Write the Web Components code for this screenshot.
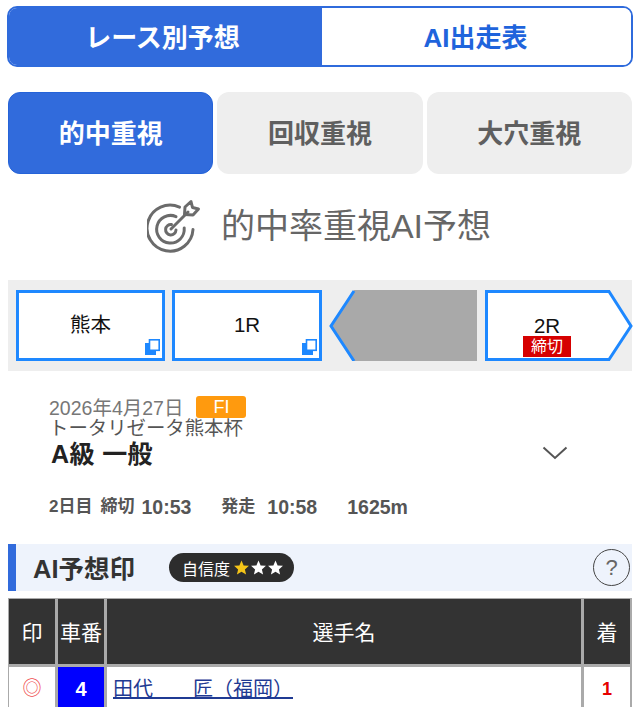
<!DOCTYPE html>
<html lang="ja">
<head>
<meta charset="utf-8">
<title>AI予想</title>
<style>
  html, body { margin: 0; padding: 0; background: #fff; }
  body {
    height: 707px;
    overflow: hidden;
    font-family: "Liberation Sans", "Noto Sans CJK JP", sans-serif;
    padding: 6px 8px 0;
    box-sizing: border-box;
  }
</style>
</head>
<body>
  <seg-tabs>
    <span slot="left">レース別予想</span>
    <span slot="right">AI出走表</span>
  </seg-tabs>
  <mode-tabs>
    <mode-tab active>的中重視</mode-tab>
    <mode-tab>回収重視</mode-tab>
    <mode-tab>大穴重視</mode-tab>
  </mode-tabs>
  <predict-heading>的中率重視AI予想</predict-heading>
  <race-nav>
    <nav-box copy>熊本</nav-box>
    <nav-box copy>1R</nav-box>
    <nav-box shape="prev"></nav-box>
    <nav-box shape="next" closed>2R</nav-box>
  </race-nav>
  <race-info></race-info>
  <section-title></section-title>
  <mark-table></mark-table>

<script>
(function() {
  // top segment: two halves inside one blue outline
  class SegTabs extends HTMLElement {
    constructor() {
      super();
      this.attachShadow({ mode: "open" });
      this.shadowRoot.innerHTML = `
        <style>
          :host {
            display: grid;
            grid-template-columns: 313px 1fr;
            height: 61px;
            margin: 0 -1px 0 -1px;
            border: 2.5px solid #2f6bdc;
            border-radius: 10px;
            box-sizing: border-box;
            overflow: hidden;
            font-weight: bold;
            font-size: 26px;
          }
          div { display: flex; align-items: center; justify-content: center; padding-bottom: 2px; }
          .on { background: #316bdc; color: #fff; padding-right: 6px; }
          .off { background: #fff; color: #1f64dc; padding-right: 2px; }
        </style>
        <div class="on"><slot name="left"></slot></div>
        <div class="off"><slot name="right"></slot></div>
      `;
    }
  }
  customElements.define("seg-tabs", SegTabs);

  class ModeTabs extends HTMLElement {
    constructor() {
      super();
      this.attachShadow({ mode: "open" });
      this.shadowRoot.innerHTML = `
        <style>
          :host {
            display: grid;
            grid-template-columns: repeat(3, 1fr);
            gap: 4px;
            margin-top: 25px;
          }
        </style>
        <slot></slot>
      `;
    }
  }
  customElements.define("mode-tabs", ModeTabs);

  class ModeTab extends HTMLElement {
    constructor() {
      super();
      this.attachShadow({ mode: "open" });
      this.shadowRoot.innerHTML = `
        <style>
          :host {
            display: flex;
            align-items: center;
            justify-content: center;
            height: 82px;
            box-sizing: border-box;
            padding-bottom: 4px;
            border-radius: 12px;
            background: #eeeeee;
            color: #5f5f5f;
            font-size: 26px;
            font-weight: bold;
          }
          :host([active]) {
            background: #316bdc;
            border: 1px solid #2563d8;
            color: #fff;
          }
        </style>
        <slot></slot>
      `;
    }
  }
  customElements.define("mode-tab", ModeTab);

  class PredictHeading extends HTMLElement {
    constructor() {
      super();
      this.attachShadow({ mode: "open" });
      this.shadowRoot.innerHTML = `
        <style>
          :host {
            display: flex;
            align-items: center;
            justify-content: center;
            gap: 19px;
            height: 54px;
            margin-top: 26px;
            padding-right: 2px;
            color: #666;
            font-size: 34px;
          }
          span { margin-top: -7px; }
          svg { width: 55px; height: 54px; flex: none; margin-top: -2px; }
        </style>
        <svg viewBox="0 0 55 54" fill="none" stroke="#6b6b6b" stroke-width="3" stroke-linecap="round" stroke-linejoin="round">
          <path d="M32.5 8.200A23 23 0 1 0 46 30.500"/>
          <path d="M29 17.600A13.800 13.800 0 1 0 37.200 29"/>
          <path d="M24.500 25.600A5.200 5.200 0 1 0 29 31"/>
          <path d="M24 30 L41 13"/>
          <path d="M37.500 15.500 L38 8 L44 2.500 L45.500 8.500 L51.500 10 L46 16 Z"/>
        </svg>
        <span><slot></slot></span>
      `;
    }
  }
  customElements.define("predict-heading", PredictHeading);

  class RaceNav extends HTMLElement {
    constructor() {
      super();
      this.attachShadow({ mode: "open" });
      this.shadowRoot.innerHTML = `
        <style>
          :host {
            display: grid;
            grid-template-columns: 149px 150px 149px 148px;
            gap: 7px;
            height: 91px;
            margin-top: 26px;
            padding: 10px 0 0 8px;
            box-sizing: border-box;
            background: #eeeeee;
          }
        </style>
        <slot></slot>
      `;
    }
  }
  customElements.define("race-nav", RaceNav);

  class NavBox extends HTMLElement {
    constructor() {
      super();
      this.attachShadow({ mode: "open" });
      const shape = this.getAttribute("shape");
      let bg = "";
      if (shape === "prev") {
        bg = `<svg viewBox="0 0 149 71" preserveAspectRatio="none">
          <path d="M25 0H148V71H25L1 36Z" fill="#a9a9a9"/>
          <path d="M25 1L2 36L25 71" fill="none" stroke="#1e88ff" stroke-width="3"/>
        </svg>`;
      } else if (shape === "next") {
        bg = `<svg viewBox="0 0 148 71" preserveAspectRatio="none">
          <path d="M1.500 1.500H124L146 36L124 69.500H1.500Z" fill="#fff" stroke="#1e88ff" stroke-width="3"/>
        </svg>`;
      } else {
        bg = `<svg viewBox="0 0 150 71" preserveAspectRatio="none">
          <rect x="1.500" y="1.500" width="147" height="68" fill="#fff" stroke="#1e88ff" stroke-width="3"/>
        </svg>`;
      }
      const copy = this.hasAttribute("copy") ? `
        <svg class="copy" viewBox="0 0 15 16">
          <rect x="0" y="4" width="11" height="12" fill="#1e88ff"/>
          <rect x="4.500" y="0.800" width="9.700" height="10.500" fill="#fff" stroke="#1e88ff" stroke-width="1.600"/>
        </svg>` : "";
      const closed = this.hasAttribute("closed") ? `<span class="closed">締切</span>` : "";
      this.shadowRoot.innerHTML = `
        <style>
          :host {
            display: flex;
            flex-direction: column;
            align-items: center;
            justify-content: center;
            position: relative;
            height: 71px;
            box-sizing: border-box;
            padding-bottom: 1px;
            color: #111;
            font-size: 20.500px;
            line-height: 22px;
          }
          :host([shape="next"]) { padding: 21px 24px 0 0; }
          svg { position: absolute; left: 0; top: 0; width: 100%; height: 100%; }
          svg.copy { left: auto; top: auto; right: 5px; bottom: 6px; width: 15px; height: 16px; }
          .label { position: relative; }
          .closed {
            position: relative;
            background: #d60000;
            color: #fff;
            font-size: 16px;
            line-height: 21px;
            width: 48px;
            margin-top: -1px;
            text-align: center;
          }
        </style>
        ${bg}${copy}
        <span class="label"><slot></slot></span>
        ${closed}
      `;
    }
  }
  customElements.define("nav-box", NavBox);

  class RaceInfo extends HTMLElement {
    constructor() {
      super();
      this.attachShadow({ mode: "open" });
      this.shadowRoot.innerHTML = `
        <style>
          :host {
            display: block;
            position: relative;
            padding: 25px 0 0 41px;
            height: 173px;
            box-sizing: border-box;
          }
          .top { display: flex; align-items: center; height: 22px; gap: 13px; }
          .date { color: #777; font-size: 19.500px; margin-top: -2px; }
          .grade {
            width: 50px;
            height: 22px;
            line-height: 22px;
            border-radius: 3px;
            background: #ff9a0e;
            color: #fff;
            text-align: center;
            font-size: 18px;
          }
          .title { color: #555; font-size: 19.400px; line-height: 20px; }
          .cls { color: #222; font-size: 25px; font-weight: bold; line-height: 28px; margin: 2px 0 0 2px; letter-spacing: .4px; }
          .meta {
            display: flex;
            color: #555;
            font-size: 19.500px;
            font-weight: bold;
            margin-top: 27px;
            line-height: 24px;
          }
          .meta small { font-size: 17px; font-weight: bold; }
          .m1 { margin-left: 8px; }
          .n1 { margin-left: 7px; }
          .m2 { margin-left: 30px; }
          .n2 { margin-left: 12px; }
          .m3 { margin-left: 30px; }
          .chev { position: absolute; right: 64px; top: 75px; width: 26px; height: 14px; }
        </style>
        <div class="top"><span class="date">2026年4月27日</span><span class="grade">FI</span></div>
        <div class="title">トータリゼータ熊本杯</div>
        <div class="cls">A級 一般</div>
        <div class="meta">
          <small>2日目</small><small class="m1">締切</small><span class="n1">10:53</span>
          <small class="m2">発走</small><span class="n2">10:58</span>
          <span class="m3">1625m</span>
        </div>
        <svg class="chev" viewBox="0 0 26 14" fill="none" stroke="#555" stroke-width="2">
          <path d="M1.500 1.500L13 12L24.500 1.500"/>
        </svg>
      `;
    }
  }
  customElements.define("race-info", RaceInfo);

  class SectionTitle extends HTMLElement {
    constructor() {
      super();
      this.attachShadow({ mode: "open" });
      const star = c => `<svg viewBox="0 0 24 24"><path fill="${c}" d="M12 2l3 7 7.500 .7-5.700 5 1.700 7.300-6.500-3.900-6.500 3.900 1.700-7.300-5.700-5 7.500-.7z"/></svg>`;
      this.shadowRoot.innerHTML = `
        <style>
          :host {
            display: flex;
            align-items: center;
            height: 47px;
            box-sizing: border-box;
            background: #eef3fc;
            border-left: 8px solid #316bdc;
            padding: 0 2px 0 17px;
          }
          h2 { margin: -2px 0 0; color: #333; font-size: 25.500px; font-weight: bold; }
          .pill {
            display: flex;
            align-items: center;
            gap: 3px;
            height: 29px;
            width: 125px;
            box-sizing: border-box;
            margin: 0 0 0 34px;
            padding-left: 13px;
            border-radius: 15px;
            background: #2d2d2d;
            color: #fff;
            font-size: 16px;
          }
          .stars { display: flex; }
          .stars svg { width: 17px; height: 17px; }
          .help {
            display: flex;
            align-items: center;
            justify-content: center;
            margin-left: auto;
            width: 37px;
            height: 37px;
            box-sizing: border-box;
            border: 1px solid #444;
            border-radius: 50%;
            color: #666;
            font-size: 22px;
          }
        </style>
        <h2>AI予想印</h2>
        <div class="pill">自信度
          <span class="stars">${star("#f5c518")}${star("#fff")}${star("#fff")}</span>
        </div>
        <div class="help">?</div>
      `;
    }
  }
  customElements.define("section-title", SectionTitle);

  class MarkTable extends HTMLElement {
    constructor() {
      super();
      this.attachShadow({ mode: "open" });
      this.shadowRoot.innerHTML = `
        <style>
          :host {
            display: grid;
            grid-template-columns: 46px 46px 474px 46px;
            grid-template-rows: 65px 56px;
            gap: 3px;
            margin-top: 7px;
            padding: 1px 2px 0 1px;
            background: #aaaaaa;
          }
          div { display: flex; align-items: center; justify-content: center; }
          .th { background: #333; color: #fff; font-size: 21px; padding-bottom: 2px; box-sizing: border-box; }
          .td { background: #fff; align-items: flex-start; padding-top: 7px; line-height: 30px; font-size: 20px; }
          .mark { color: #f05050; font-size: 19px; }
          .car { background: #0000ff; color: #fff; font-weight: bold; }
          .name { justify-content: flex-start; padding-left: 6px; }
          .name a { color: #1f3a93; text-decoration: underline; font-size: 20px; }
          .rank { color: #e60000; font-weight: bold; font-size: 18px; }
        </style>
        <div class="th">印</div>
        <div class="th">車番</div>
        <div class="th">選手名</div>
        <div class="th">着</div>
        <div class="td mark">◎</div>
        <div class="td car">4</div>
        <div class="td name"><a href="#">田代　　匠（福岡）</a></div>
        <div class="td rank">1</div>
      `;
    }
  }
  customElements.define("mark-table", MarkTable);
})();
</script>
</body>
</html>
